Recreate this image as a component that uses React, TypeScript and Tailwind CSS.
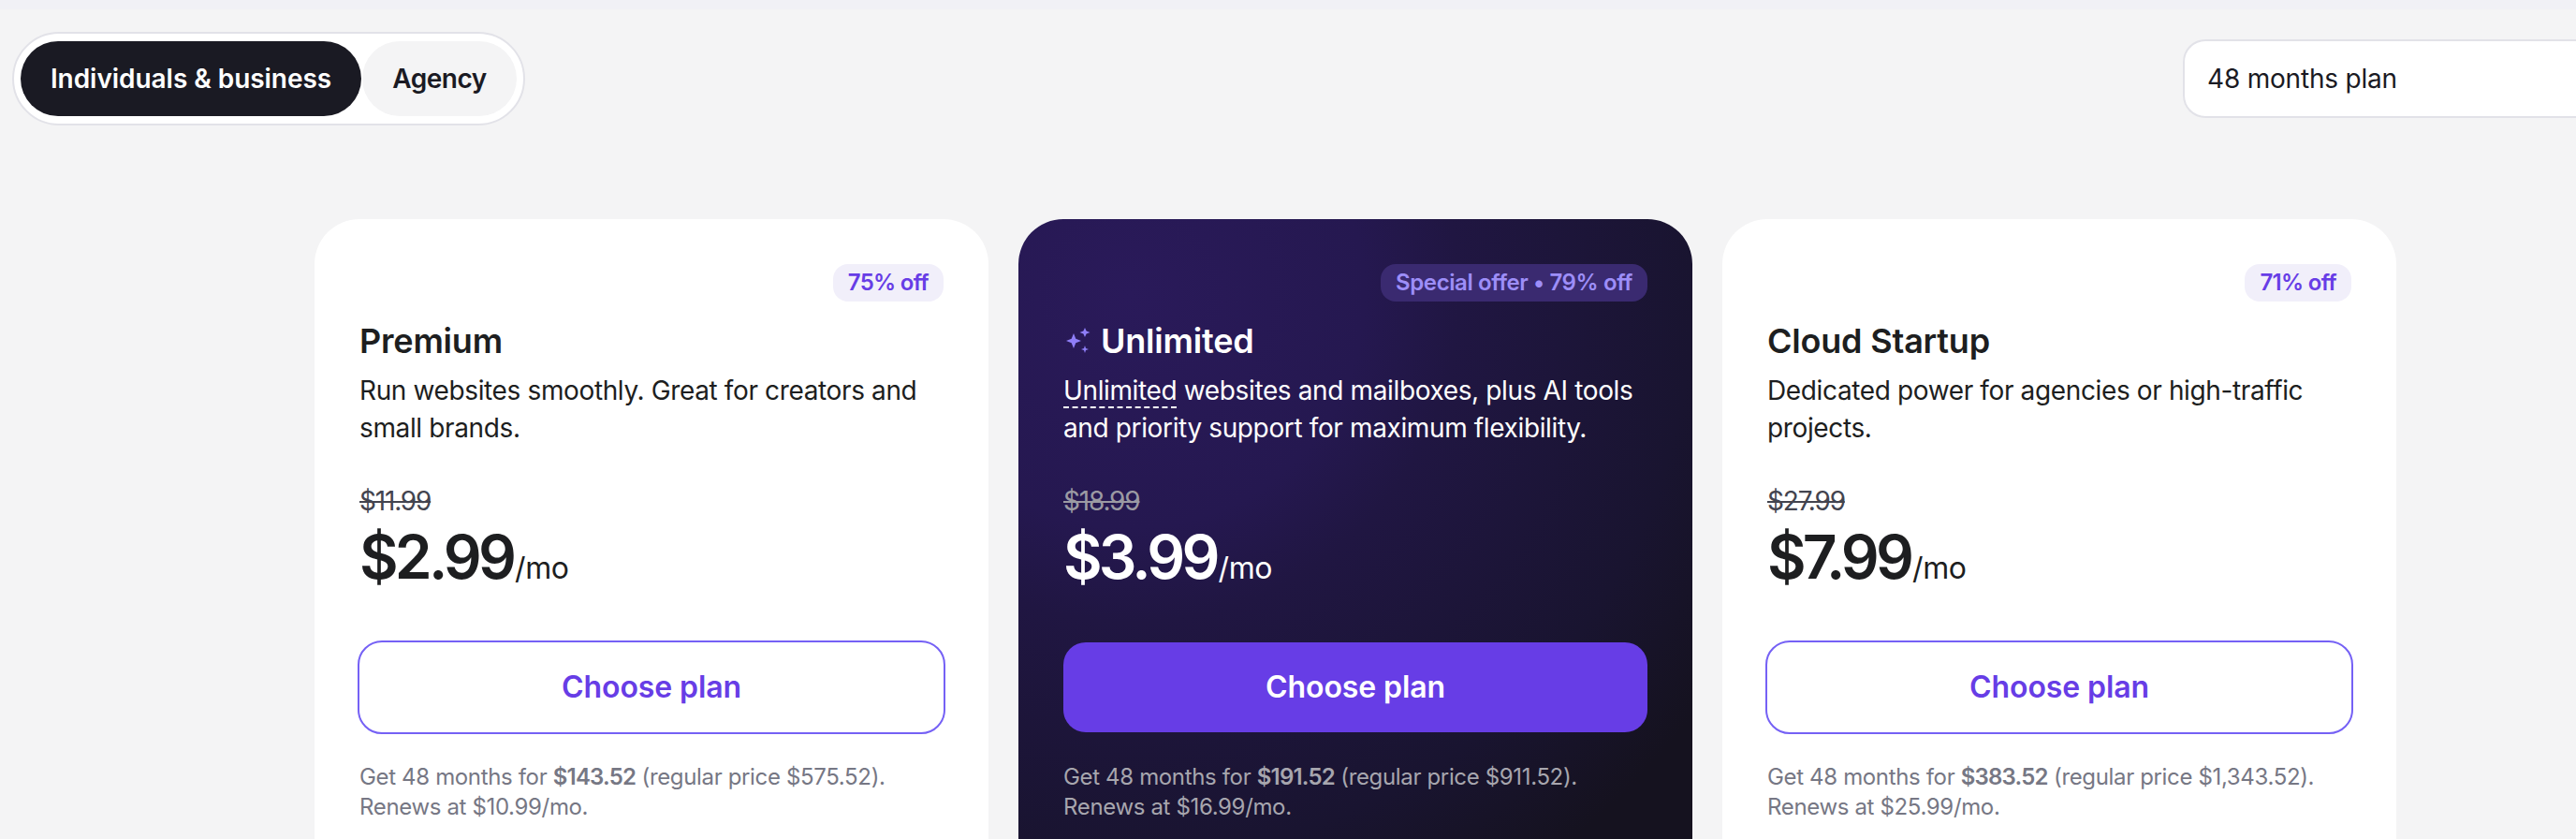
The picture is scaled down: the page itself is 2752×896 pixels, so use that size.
const plans = [
  {
    name: "Premium",
    badge: "75% off",
    desc: "Run websites smoothly. Great for creators and small brands.",
    oldPrice: "$11.99",
    price: "$2.99",
    total: "$143.52",
    regular: "$575.52",
    renews: "$10.99",
  },
  {
    name: "Unlimited",
    badge: "Special offer • 79% off",
    desc: "websites and mailboxes, plus AI tools and priority support for maximum flexibility.",
    oldPrice: "$18.99",
    price: "$3.99",
    total: "$191.52",
    regular: "$911.52",
    renews: "$16.99",
    featured: true,
  },
  {
    name: "Cloud Startup",
    badge: "71% off",
    desc: "Dedicated power for agencies or high-traffic projects.",
    oldPrice: "$27.99",
    price: "$7.99",
    total: "$383.52",
    regular: "$1,343.52",
    renews: "$25.99",
  },
];

const SparkleIcon = () => (
  <svg className="w-8 h-8 shrink-0" viewBox="0 0 32 32" fill="#8f7ef8">
    <path d="M11 8 L13.3 13.7 L19 16 L13.3 18.3 L11 24 L8.7 18.3 L3 16 L8.7 13.7 Z" />
    <path d="M23 2 L24.6 5.4 L28.5 7 L24.6 8.6 L23 12 L21.4 8.6 L17.5 7 L21.4 5.4 Z" />
    <path d="M23 21 L24 24 L27 25 L24 26 L23 29 L22 26 L19 25 L22 24 Z" />
  </svg>
);

function PlanCard({ plan }: { plan: (typeof plans)[number] }) {
  const dark = !!plan.featured;
  return (
    <div
      className={
        dark
          ? "w-[720px] h-[800px] shrink-0 rounded-[48px] p-12 text-white bg-[radial-gradient(circle_at_120px_80px,#2a1a5a_0px,#251850_250px,#201642_350px,#191430_600px,#15121f_750px)]"
          : "w-[720px] h-[800px] shrink-0 rounded-[48px] p-12 text-[#1d1e20] bg-white"
      }
    >
      <div className="flex justify-end">
        <span
          className={
            dark
              ? "h-10 px-4 flex items-center rounded-2xl text-[24px] font-semibold tracking-[-0.4px] bg-[#3a2a70] text-[#9d8ef8]"
              : "h-10 px-4 flex items-center rounded-2xl text-[24px] font-semibold tracking-[-0.7px] bg-[#f1effa] text-[#673de6]"
          }
        >
          {plan.badge}
        </span>
      </div>

      <div className="mt-4 h-[52px] flex items-center gap-2">
        {dark && <SparkleIcon />}
        <h2 className="text-[36px] font-semibold tracking-[-0.2px]">{plan.name}</h2>
      </div>

      <p className="mt-[7px] h-20 text-[28px] leading-10 tracking-[-0.37px]">
        {dark && (
          <>
            <span className="border-b-2 border-dashed border-white">Unlimited</span>{" "}
          </>
        )}
        {plan.desc}
      </p>

      <div className={dark ? "mt-[42px] text-[28px] leading-8 tracking-[-1.2px] line-through text-[#9b9aa3]" : "mt-[42px] text-[28px] leading-8 tracking-[-1.2px] line-through text-[#43444f]"}>
        {plan.oldPrice}
      </div>

      <div className="mt-2 h-[72px] flex items-baseline">
        <span className="text-[64px] leading-[72px] font-semibold tracking-[-3.8px]">{plan.price}</span>
        <span className="text-[32px] leading-[72px] tracking-[-0.4px] ml-[2px]">/mo</span>
      </div>

      <button
        className={
          dark
            ? "mt-[55px] w-full h-24 rounded-3xl text-[32px] font-semibold tracking-[-0.1px] bg-[#673de6] text-white"
            : "mt-[55px] w-full h-24 rounded-3xl text-[32px] font-semibold tracking-[-0.1px] bg-white text-[#673de6] outline-2 outline-[#7561f5]"
        }
      >
        Choose plan
      </button>

      <p className={dark ? "mt-8 text-[24px] leading-8 tracking-[-0.35px] text-[#a7a6ae]" : "mt-8 text-[24px] leading-8 tracking-[-0.35px] text-[#767784]"}>
        Get 48 months for <b className="font-semibold tracking-[-0.8px]">{plan.total}</b> (regular price {plan.regular}).
        <br />
        Renews at {plan.renews}/mo.
      </p>
    </div>
  );
}

export default function App() {
  return (
    <div className="w-[2752px] h-[896px] overflow-hidden bg-[#f4f4f5] [font-family:Inter,sans-serif]">
      <div className="h-[10px] bg-[#f1f1f6]" />

      <div className="mt-6 flex items-center justify-between pl-[13px]">
        <div className="h-[100px] flex items-center gap-[1px] rounded-full bg-white border-2 border-[#e2e2e8] pl-[7px] pr-[7px]">
          <button className="h-20 w-[364px] rounded-full bg-[#1a1a23] text-white text-[28px] font-semibold tracking-[-0.05px]">
            Individuals &amp; business
          </button>
          <button className="h-20 w-[165px] rounded-full bg-[#f4f4f5] text-[#1a1a23] text-[28px] font-semibold tracking-[-0.5px]">
            Agency
          </button>
        </div>

        <div className="w-[420px] h-[84px] shrink-0 flex items-center rounded-l-3xl bg-white border-2 border-r-0 border-[#e2e2e8] pl-6 text-[28px] text-[#1a1a23] tracking-[-0.2px]">
          48 months plan
        </div>
      </div>

      <div className="mt-[100px] pl-[336px] flex gap-8">
        {plans.map((plan) => (
          <PlanCard key={plan.name} plan={plan} />
        ))}
      </div>
    </div>
  );
}
